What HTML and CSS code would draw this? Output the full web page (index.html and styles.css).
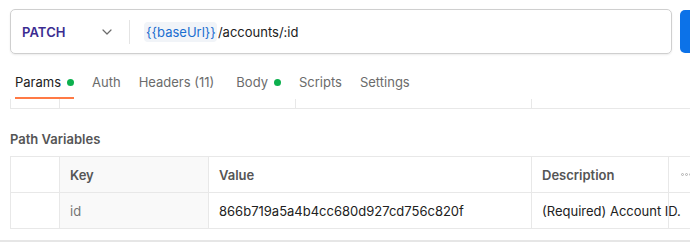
FILE: index.html
```html
<!DOCTYPE html>
<html lang="en">
<head>
<meta charset="utf-8">
<title>Request</title>
<link rel="stylesheet" href="styles.css">
</head>
<body>
<div class="page">
  <div class="request-bar">
    <div class="url-box">
      <div class="method">
        <span class="method-name">PATCH</span>
        <svg class="chevron" width="10" height="6" viewBox="0 0 10 6"><path d="M1 1l4 4 4-4" fill="none" stroke="#6b6b6b" stroke-width="1.2" stroke-linecap="round" stroke-linejoin="round"/></svg>
      </div>
      <div class="sep"></div>
      <div class="url">
        <span class="var">{{baseUrl}}</span><span class="path">/accounts/:id</span>
      </div>
    </div>
    <div class="send"></div>
  </div>

  <div class="tabs">
    <div class="tab active">Params<span class="dot"></span></div>
    <div class="tab">Auth</div>
    <div class="tab wide">Headers (11)</div>
    <div class="tab">Body<span class="dot"></span></div>
    <div class="tab">Scripts</div>
    <div class="tab">Settings</div>
  </div>

  <div class="remnant">
    <div class="rc c1"></div>
    <div class="rc c2"></div>
    <div class="rc c3"></div>
    <div class="rc c4"></div>
  </div>

  <div class="section-title">Path Variables</div>

  <div class="table">
    <div class="row head">
      <div class="cell check"></div>
      <div class="cell key">Key</div>
      <div class="cell value">Value</div>
      <div class="cell desc">Description</div>
      <div class="cell more"><span class="dots"><i></i><i></i><i></i></span></div>
    </div>
    <div class="row">
      <div class="cell check"></div>
      <div class="cell key muted">id</div>
      <div class="cell value">866b719a5a4b4cc680d927cd756c820f</div>
      <div class="cell desc">(Required) Account ID.</div>
      <div class="cell more"></div>
    </div>
  </div>

  <div class="bottom-line"></div>
</div>
</body>
</html>
```

FILE: styles.css
```css
html, body {
  margin: 0;
  padding: 0;
  background: #ffffff;
  overflow: hidden;
}

.page {
  width: 690px;
  height: 242px;
  overflow: hidden;
  font-family: Inter, "Noto Sans", sans-serif;
  font-size: 13px;
  color: #212121;
}

.request-bar {
  display: flex;
  gap: 8px;
  padding: 9px 0 0 10px;
  width: 760px;
}

.url-box {
  box-sizing: border-box;
  width: 662px;
  height: 45px;
  border: 1px solid #cfcfcf;
  border-radius: 5px;
  box-shadow: 0 1px 2px rgba(0, 0, 0, 0.08);
  display: flex;
  align-items: center;
  flex-shrink: 0;
}

.method {
  width: 118px;
  box-sizing: border-box;
  padding-left: 11px;
  padding-right: 17px;
  display: flex;
  align-items: center;
  justify-content: space-between;
}

.method-name {
  font-weight: 600;
  color: #3b2c91;
  letter-spacing: 0.1px;
}

.chevron {
  display: block;
}

.sep {
  width: 1px;
  height: 24px;
  background: #e4e4e4;
}

.url {
  padding-left: 14px;
  display: flex;
  align-items: center;
}

.var {
  color: #1a6ed0;
  background: #f1f4f8;
  border-radius: 4px;
  padding: 2px 1px 2px 2px;
  margin-right: 1px;
}

.path {
  color: #212121;
}

.send {
  width: 80px;
  height: 43px;
  margin-top: 1px;
  background: #0c72e8;
  border-radius: 5px;
  flex-shrink: 0;
}

.tabs {
  display: flex;
  gap: 18px;
  padding-left: 15px;
  margin-top: 13px;
  height: 32px;
}

.tab {
  display: flex;
  align-items: center;
  color: #6b6b6b;
  box-sizing: border-box;
  height: 32px;
  border-bottom: 2px solid transparent;
}

.tab.wide {
  margin-right: 4px;
}

.tab.active {
  color: #212121;
  border-bottom-color: #ff7a45;
}

.dot {
  width: 7px;
  height: 7px;
  border-radius: 50%;
  background: #0cb04e;
  margin-left: 6px;
}

.remnant {
  display: flex;
  margin-left: 10px;
  height: 9px;
  border-bottom: 1px solid #e8e8e8;
}

.rc {
  box-sizing: border-box;
  border-left: 1px solid #e8e8e8;
  height: 9px;
}

.rc.c1 { width: 49px; }
.rc.c2 { width: 236px; }
.rc.c3 { width: 236px; }
.rc.c4 { flex: 1; }

.section-title {
  margin: 22px 0 0 10px;
  font-weight: 600;
  color: #555555;
  height: 17px;
  line-height: 17px;
}

.table {
  margin: 8px 0 0 10px;
  border-top: 1px solid #e8e8e8;
  width: 720px;
}

.row {
  display: flex;
  height: 35px;
  border-bottom: 1px solid #e8e8e8;
}

.cell {
  box-sizing: border-box;
  border-left: 1px solid #e8e8e8;
  display: flex;
  align-items: center;
  padding-left: 10px;
  white-space: nowrap;
  color: #212121;
}

.head .cell {
  font-weight: 600;
  color: #555555;
}

.check { width: 49px; }
.key { width: 149px; background: #f9f9f9; }
.value { width: 323px; }
.desc { width: 137px; }
.more { width: 62px; padding-left: 12px; }

.muted {
  color: #757575;
}

.dots {
  display: flex;
  gap: 1px;
}

.dots i {
  display: block;
  width: 3px;
  height: 3px;
  border: 1px solid #b0b0b0;
  border-radius: 50%;
  box-sizing: border-box;
}

.bottom-line {
  margin-top: 11px;
  height: 2px;
  background: #e6e6e6;
}
```
